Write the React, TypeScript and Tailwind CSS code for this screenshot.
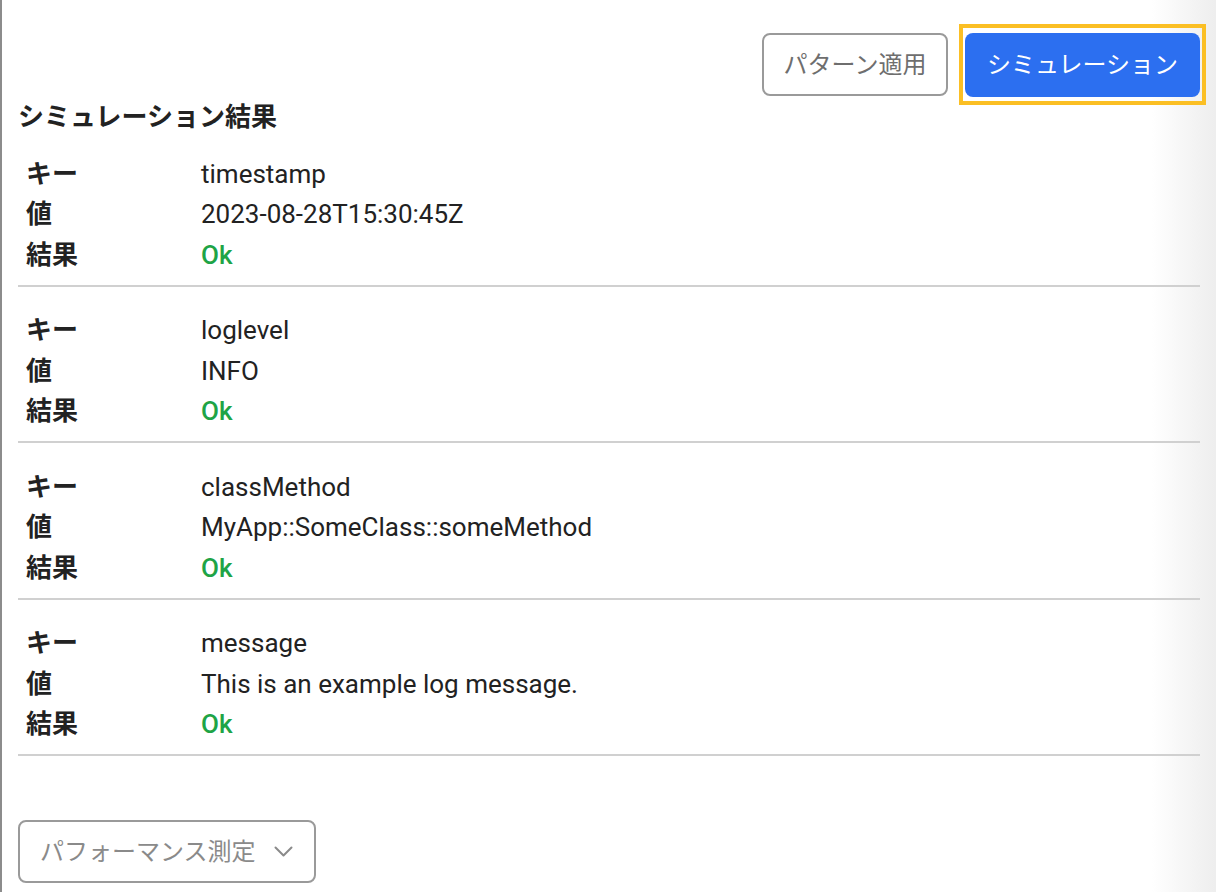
import React from "react";

const rows = [
  { key: "timestamp", value: "2023-08-28T15:30:45Z" },
  { key: "loglevel", value: "INFO" },
  { key: "classMethod", value: "MyApp::SomeClass::someMethod" },
  { key: "message", value: "This is an example log message." },
];

const font = { fontFamily: 'Roboto, "Noto Sans CJK JP", sans-serif' };

export default function App() {
  return (
    <div
      className="min-h-screen w-[1216px] border-l-2 border-[#8c8c8c] bg-[linear-gradient(90deg,#ffffff_1150px,#ededed_1216px)] pl-4 pr-[10px] pt-[24px] text-[#222]"
      style={font}
    >
      <div className="flex items-center justify-end gap-[11px]">
        <button className="h-[63px] w-[186px] rounded-[8px] border-2 border-[#9a9a9a] bg-white text-[24px] text-[#6e6e6e]">
          パターン適用
        </button>
        <div className="border-4 border-[#fbbf24] px-[2px] pb-[4px] pt-[5px]">
          <button className="block h-[64px] w-[235px] rounded-[8px] bg-[#2c6ff0] text-[24px] text-white">
            シミュレーション
          </button>
        </div>
      </div>
      <h2 className="-mt-[8px] flex h-[40px] items-center text-[26px] font-bold text-[#222]">
        シミュレーション結果
      </h2>
      <div className="pr-[6px] pt-[17px]">
        {rows.map((r, i) => (
          <div key={i} className={i === 0 ? "" : "pt-[24px]"}>
            <div className="grid grid-cols-[175px_1fr] text-[26px]">
              <div className="flex h-[40.5px] items-center px-2 font-bold">キー</div>
              <div className="flex h-[40.5px] items-center px-2">{r.key}</div>
              <div className="flex h-[40.5px] items-center px-2 font-bold">値</div>
              <div className="flex h-[40.5px] items-center px-2">{r.value}</div>
              <div className="flex h-[40.5px] items-center px-2 font-bold">結果</div>
              <div className="flex h-[40.5px] items-center px-2 font-medium text-[#1ea446]">Ok</div>
            </div>
            <div className="mt-[9px] h-[2px] bg-[#d0d0d0]" />
          </div>
        ))}
      </div>
      <div className="pt-[64px]">
        <button className="flex h-[63px] w-[298px] items-center rounded-[8px] border-2 border-[#9a9a9a] bg-white pl-[20px] text-[24px] text-[#8a8a8a]">
          <span>パフォーマンス測定</span>
          <svg className="ml-[18px]" width="19" height="11" viewBox="0 0 19 11" fill="none">
            <path d="M1.5 1.5l8 8 8-8" stroke="#8a8a8a" strokeWidth="2" strokeLinecap="round" strokeLinejoin="round" />
          </svg>
        </button>
      </div>
    </div>
  );
}
